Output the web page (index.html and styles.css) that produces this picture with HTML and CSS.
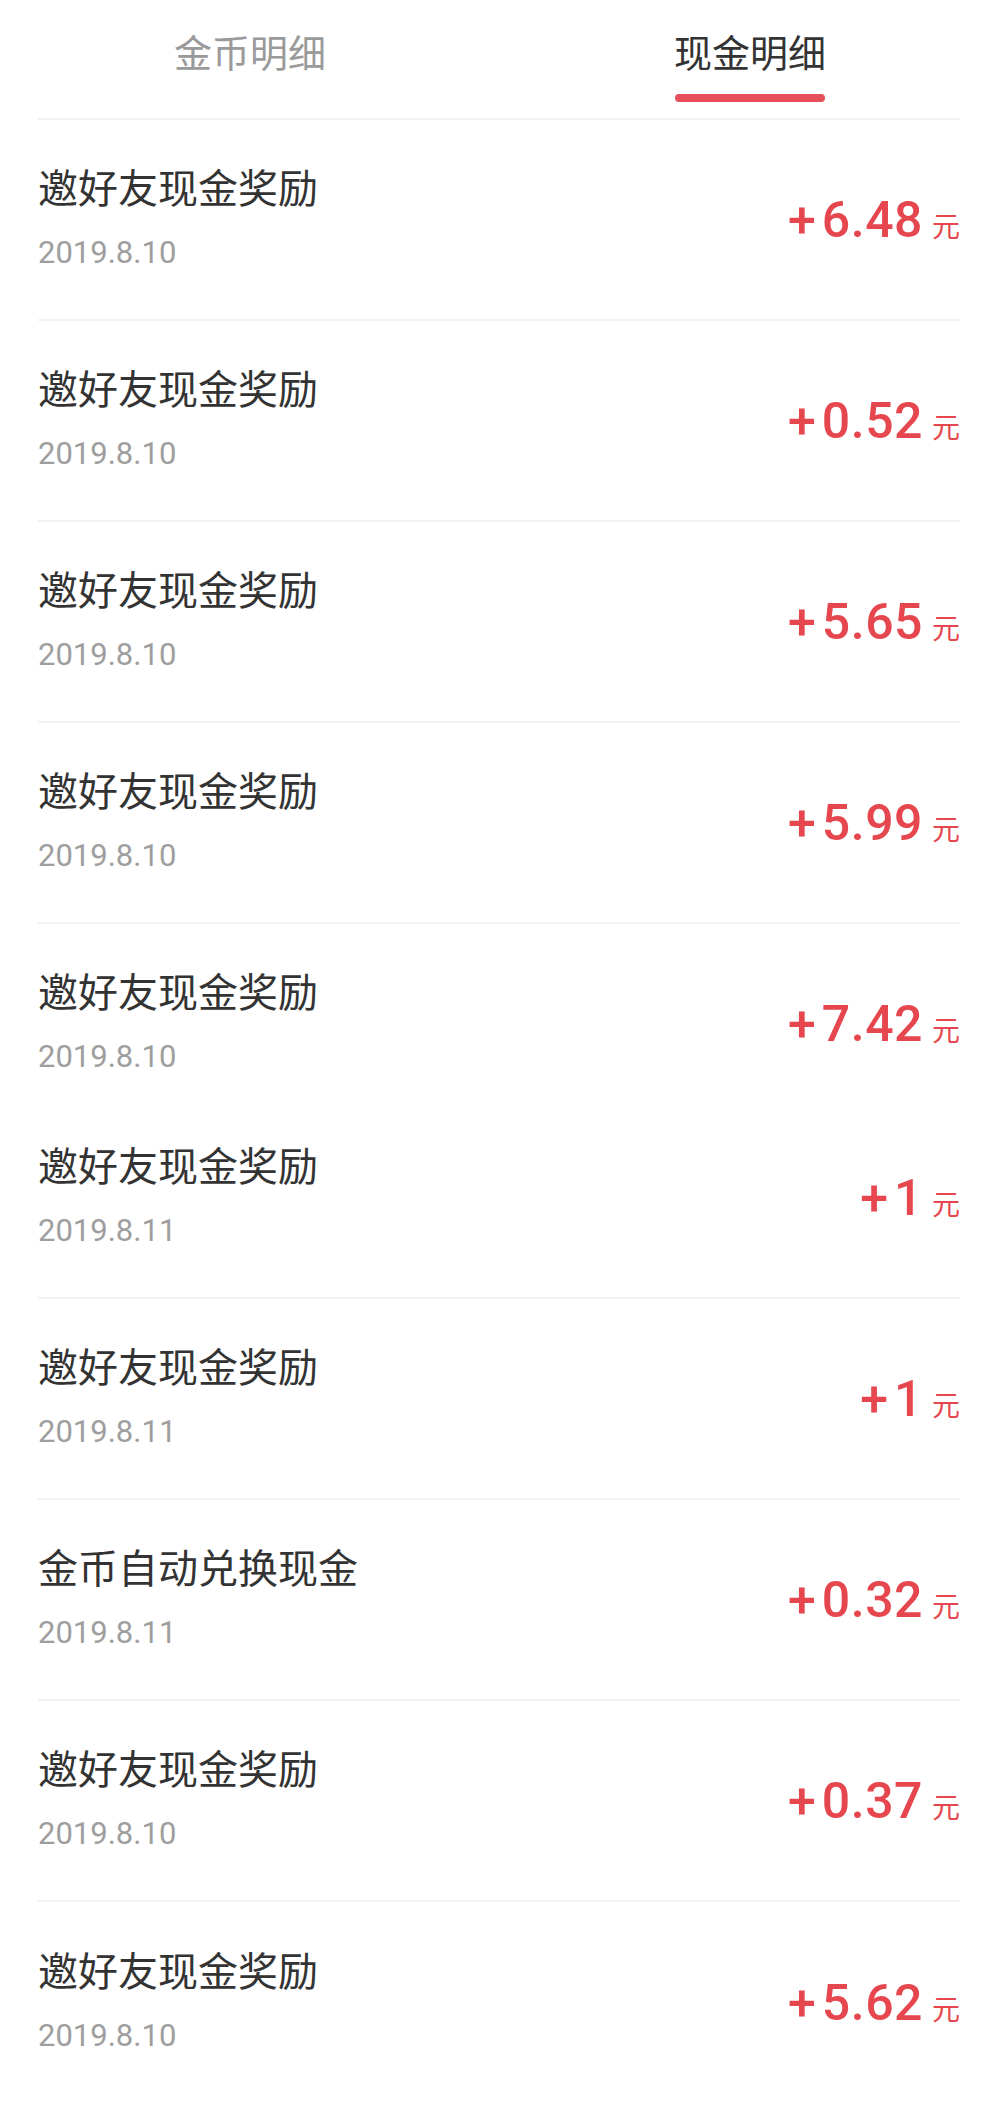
FILE: index.html
```html
<!DOCTYPE html>
<html lang="zh-CN">
<head>
<meta charset="utf-8">
<title>现金明细</title>
<link rel="stylesheet" href="styles.css">
</head>
<body>
<div class="page">
  <nav class="tabs">
    <div class="tab"><span class="tab-label">金币明细</span><span class="tab-bar"></span></div>
    <div class="tab tab--active"><span class="tab-label">现金明细</span><span class="tab-bar"></span></div>
  </nav>
  <ul class="list">
    <li class="row"><div class="info"><div class="title">邀好友现金奖励</div><div class="date">2019.8.10</div></div><div class="amount"><span class="sign">+</span><span class="num">6.48</span><span class="unit">元</span></div></li>
    <li class="row"><div class="info"><div class="title">邀好友现金奖励</div><div class="date">2019.8.10</div></div><div class="amount"><span class="sign">+</span><span class="num">0.52</span><span class="unit">元</span></div></li>
    <li class="row"><div class="info"><div class="title">邀好友现金奖励</div><div class="date">2019.8.10</div></div><div class="amount"><span class="sign">+</span><span class="num">5.65</span><span class="unit">元</span></div></li>
    <li class="row"><div class="info"><div class="title">邀好友现金奖励</div><div class="date">2019.8.10</div></div><div class="amount"><span class="sign">+</span><span class="num">5.99</span><span class="unit">元</span></div></li>
    <li class="row row--cut"><div class="info"><div class="title">邀好友现金奖励</div><div class="date">2019.8.10</div></div><div class="amount"><span class="sign">+</span><span class="num">7.42</span><span class="unit">元</span></div></li>
    <li class="row"><div class="info"><div class="title">邀好友现金奖励</div><div class="date">2019.8.11</div></div><div class="amount"><span class="sign">+</span><span class="num">1</span><span class="unit">元</span></div></li>
    <li class="row"><div class="info"><div class="title">邀好友现金奖励</div><div class="date">2019.8.11</div></div><div class="amount"><span class="sign">+</span><span class="num">1</span><span class="unit">元</span></div></li>
    <li class="row"><div class="info"><div class="title">金币自动兑换现金</div><div class="date">2019.8.11</div></div><div class="amount"><span class="sign">+</span><span class="num">0.32</span><span class="unit">元</span></div></li>
    <li class="row"><div class="info"><div class="title">邀好友现金奖励</div><div class="date">2019.8.10</div></div><div class="amount"><span class="sign">+</span><span class="num">0.37</span><span class="unit">元</span></div></li>
    <li class="row row--last"><div class="info"><div class="title">邀好友现金奖励</div><div class="date">2019.8.10</div></div><div class="amount"><span class="sign">+</span><span class="num">5.62</span><span class="unit">元</span></div></li>
  </ul>
</div>
</body>
</html>
```
FILE: styles.css
```css
* { box-sizing: border-box; }
html, body { margin: 0; padding: 0; background: #fff; }
body { font-family: "Noto Sans CJK SC", "Noto Sans", sans-serif; color: #333; }

.page { width: 1000px; }

.tabs {
  display: flex;
  height: 118px;
  padding-top: 26px;
}
.tab {
  flex: 1;
  display: flex;
  flex-direction: column;
  align-items: center;
}
.tab-label {
  font-size: 38px;
  line-height: 50px;
  color: #9a9a9a;
}
.tab-bar {
  width: 150px;
  height: 8px;
  margin-top: 18px;
  border-radius: 4px;
  background: transparent;
}
.tab--active .tab-label { color: #333; }
.tab--active .tab-bar { background: #e5505a; }

.list {
  list-style: none;
  margin: 0 40px 0 38px;
  padding: 0;
  border-top: 2px solid #f2f2f2;
}
.row {
  display: flex;
  align-items: center;
  justify-content: space-between;
  height: 201px;
  padding: 46px 0;
  border-bottom: 2px solid #f2f2f2;
}
.row--cut {
  height: 174px;
  padding: 46px 0 21px;
  border-bottom: none;
}
.row--last { border-bottom: none; }

.info { display: flex; flex-direction: column; }
.title {
  font-size: 40px;
  line-height: 40px;
  color: #333;
}
.date {
  margin-top: 27px;
  font-family: Roboto, "Noto Sans", sans-serif;
  font-size: 31px;
  line-height: 40px;
  color: #9e9e9e;
}
.amount {
  display: flex;
  align-items: baseline;
  margin-top: 1px;
  color: #e6474f;
  font-family: Roboto, "Noto Sans", sans-serif;
}
.sign {
  font-weight: 500;
  font-size: 50px;
  line-height: 60px;
  margin-right: 6px;
}
.num {
  font-weight: 500;
  font-size: 50px;
  line-height: 60px;
  letter-spacing: 0.5px;
}
.unit {
  margin-left: 9px;
  font-family: "Noto Sans CJK SC", sans-serif;
  font-size: 28px;
  color: #e6474f;
}
```
